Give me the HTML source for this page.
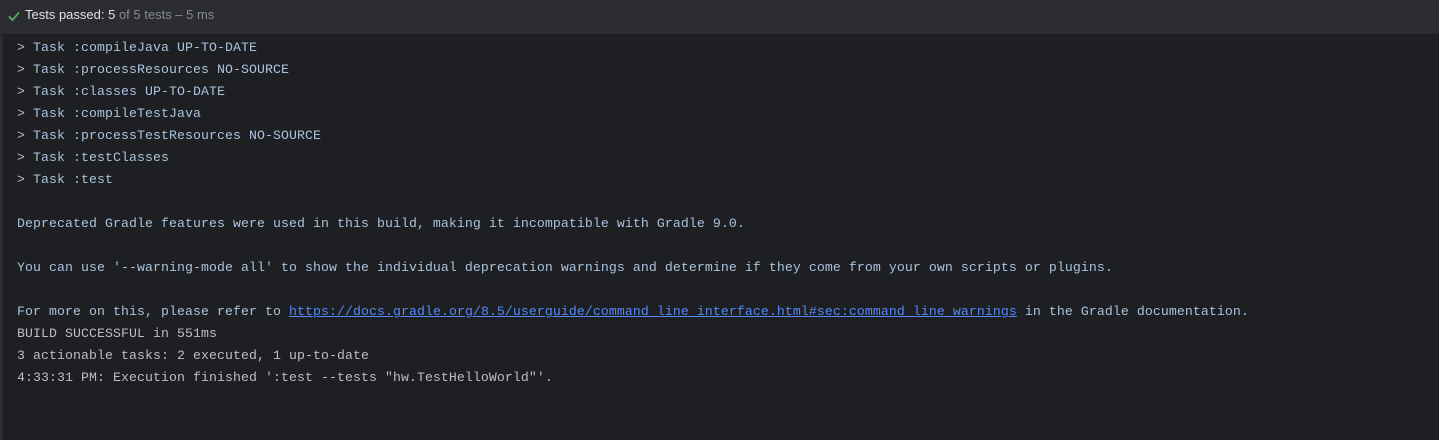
<!DOCTYPE html>
<html><head><style>
html,body{margin:0;padding:0;width:1439px;height:440px;background:#1e1f22;overflow:hidden}
.hdr{position:absolute;left:0;top:0;width:1439px;height:34px;background:#2b2d30;border-bottom:1px solid #1e1f22;font-family:"Liberation Sans",sans-serif;font-size:13px;color:#dfe1e5}
.hdr .t{position:absolute;left:25px;top:7px}
.hdr .g{color:#868a91}
.strip{position:absolute;left:0;top:35px;width:3px;height:405px;background:#2b2d30}
.con{position:absolute;left:17px;top:37px;font-family:"Liberation Mono",monospace;font-size:13.2px;letter-spacing:0.085px;line-height:22px;color:#bcbec4;white-space:pre}
.b{color:#a9c3de}
a{color:#548af7;text-decoration:underline}
</style></head><body>
<div class="hdr"><svg style="position:absolute;left:7px;top:9px" width="14" height="14" viewBox="0 0 14 14"><path d="M2 7.5 L5.5 11 L12 3.5" stroke="#5fb865" stroke-width="1.6" fill="none"/></svg><span class="t">Tests passed: 5 <span class="g">of 5 tests – 5 ms</span></span></div>
<div class="strip"></div>
<div class="con">&gt; <span class="b">Task :compileJava UP-TO-DATE</span>
&gt; <span class="b">Task :processResources NO-SOURCE</span>
&gt; <span class="b">Task :classes UP-TO-DATE</span>
&gt; <span class="b">Task :compileTestJava</span>
&gt; <span class="b">Task :processTestResources NO-SOURCE</span>
&gt; <span class="b">Task :testClasses</span>
&gt; <span class="b">Task :test</span>

<span class="b">Deprecated Gradle features were used in this build, making it incompatible with Gradle 9.0.</span>

<span class="b">You can use '--warning-mode all' to show the individual deprecation warnings and determine if they come from your own scripts or plugins.</span>

<span class="b">For more on this, please refer to </span><a>https://docs.gradle.org/8.5/userguide/command_line_interface.html#sec:command_line_warnings</a><span class="b"> in the Gradle documentation.</span>
BUILD SUCCESSFUL in 551ms
3 actionable tasks: 2 executed, 1 up-to-date
4:33:31 PM: Execution finished ':test --tests "hw.TestHelloWorld"'.</div>
</body></html>
